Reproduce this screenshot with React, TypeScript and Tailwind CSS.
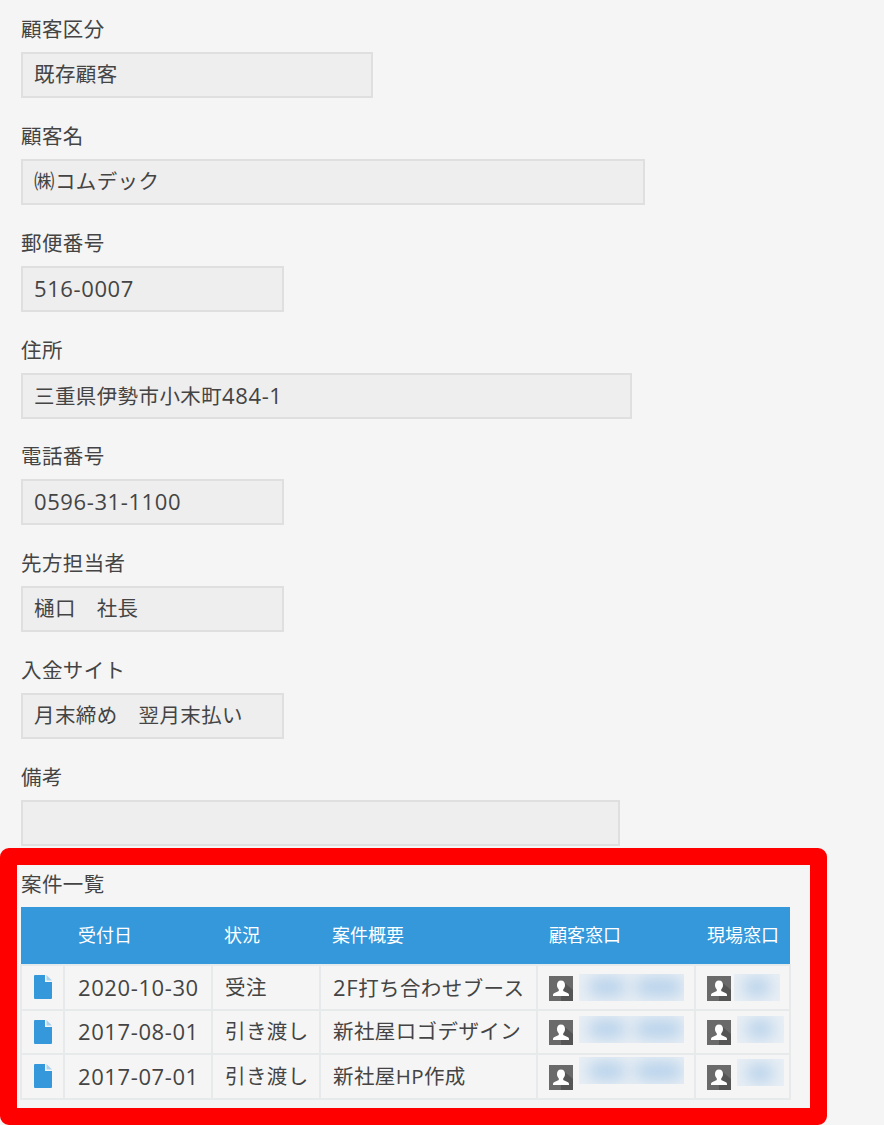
import type { ReactNode } from "react";

const FONT = "font-['Open_Sans','Noto_Sans_CJK_JP',sans-serif]";

// latin digits sit a bit bigger and wider than the kana around them
const Num = ({ children }: { children: ReactNode }) => (
  <span className="text-[22px] tracking-[0.6px]">{children}</span>
);

const fields: { label: string; value: ReactNode; width: string }[] = [
  { label: "顧客区分", value: "既存顧客", width: "w-[352px]" },
  { label: "顧客名", value: "㈱コムデック", width: "w-[624px]" },
  { label: "郵便番号", value: <Num>516-0007</Num>, width: "w-[263px]" },
  { label: "住所", value: <>三重県伊勢市小木町<Num>484-1</Num></>, width: "w-[611px]" },
  { label: "電話番号", value: <Num>0596-31-1100</Num>, width: "w-[263px]" },
  { label: "先方担当者", value: "樋口　社長", width: "w-[263px]" },
  { label: "入金サイト", value: "月末締め　翌月末払い", width: "w-[263px]" },
  { label: "備考", value: "", width: "w-[599px]" },
];

const rows = [
  { date: "2020-10-30", status: "受注", title: <><Num>2F</Num>打ち合わせブース</>, a: "mb-0", b: "mb-0 ml-[3px] w-[46px]" },
  { date: "2017-08-01", status: "引き渡し", title: "新社屋ロゴデザイン", a: "mb-[5px]", b: "mb-[5px] ml-[6px] w-[47px]" },
  { date: "2017-07-01", status: "引き渡し", title: "新社屋HP作成", a: "mb-[11px]", b: "mb-[7px] ml-[6px] w-[47px]" },
];

const FileIcon = () => (
  <svg width="18" height="24" viewBox="0 0 18 24" className="mx-auto block">
    <path d="M1 0H11V7H18V23a1 1 0 0 1-1 1H1a1 1 0 0 1-1-1V1a1 1 0 0 1 1-1Z" fill="#3498db" />
    <path d="M12.5 0 18 5.5H12.5Z" fill="#a9d2ee" />
  </svg>
);

const UserIcon = () => (
  <svg width="24" height="25" viewBox="0 0 24 25" className="mt-[2px] block shrink-0">
    <rect width="24" height="25" fill="#6a6a6a" />
    <path d="M12 4 24 14V25H12Z" fill="#555" />
    <path
      d="M12 4.500c2.600 0 4 2 4 4.600 0 2-.8 3.500-1.800 4.400v1.600l4.800 2.200c.7.300 1 .9 1 1.700v1H4v-1c0-.8.300-1.400 1-1.700l4.800-2.200v-1.600C8.800 12.600 8 11.100 8 9.100c0-2.600 1.400-4.600 4-4.600Z"
      fill="#fff"
    />
  </svg>
);

const Blurred = ({ className, blobs }: { className: string; blobs: string[] }) => (
  <div className={`flex h-[27px] items-center overflow-hidden bg-[#e9eff5] ${className}`}>
    {blobs.map((b, i) => (
      <div key={i} className={`h-[18px] shrink-0 rounded-full bg-[#b4d0ea] blur-[8px] ${b}`} />
    ))}
  </div>
);

export default function App() {
  return (
    <div className={`${FONT} h-[1125px] w-[884px] overflow-hidden bg-[#f5f5f5] text-[20.5px] text-[#444]`}>
      <div className="pt-[17px] pl-[21px]">
        {fields.map((f) => (
          <div key={f.label} className="h-[106.860px]">
            <div className="h-[35px] leading-[25px] tracking-[0.4px]">{f.label}</div>
            <div className={`${f.width} h-[46px] border-2 border-[#dfdfdf] bg-[#eeeeee] pl-[11px] leading-[40px] tracking-[0.4px]`}>
              {f.value}
            </div>
          </div>
        ))}
      </div>

      {/* 案件一覧 */}
      <section className="-mt-[23.880px] h-[277px] w-[827px] rounded-[9px] border-[17px] border-[#ff0000] pl-[4px]">
        <div className="h-[42px] pt-[6px] leading-[26px] tracking-[0.4px]">案件一覧</div>
        <table className="-ml-[1px] w-[769px] table-fixed border-collapse">
          <colgroup>
            <col className="w-[43px]" />
            <col className="w-[148px]" />
            <col className="w-[108px]" />
            <col className="w-[217px]" />
            <col className="w-[158px]" />
            <col className="w-[95px]" />
          </colgroup>
          <thead>
            <tr className="h-[58px] bg-[#3498db] text-left text-[18px] text-white">
              <th className="font-normal"></th>
              <th className="pl-[14px] font-normal">受付日</th>
              <th className="pl-[12px] font-normal">状況</th>
              <th className="pl-[12px] font-normal">案件概要</th>
              <th className="pl-[12px] font-normal">顧客窓口</th>
              <th className="pl-[12px] font-normal whitespace-nowrap">現場窓口</th>
            </tr>
          </thead>
          <tbody>
            {rows.map((r) => (
              <tr key={r.date} className="h-[44.500px] tracking-[0.4px]">
                <td className="border-2 border-[#e6eaea] p-0"><FileIcon /></td>
                <td className="border-2 border-[#e6eaea] pl-[13px]"><Num>{r.date}</Num></td>
                <td className="border-2 border-[#e6eaea] pl-[12px] whitespace-nowrap">{r.status}</td>
                <td className="border-2 border-[#e6eaea] pl-[12px] whitespace-nowrap">{r.title}</td>
                <td className="border-2 border-[#e6eaea] pl-[11px]">
                  <div className="flex items-center">
                    <UserIcon />
                    <Blurred className={`ml-[6px] w-[105px] ${r.a}`} blobs={["ml-[9px] w-[38px]", "ml-[9px] w-[48px]"]} />
                  </div>
                </td>
                <td className="border-2 border-[#e6eaea] pl-[11px]">
                  <div className="flex items-center">
                    <UserIcon />
                    <Blurred className={r.b} blobs={["ml-[9px] w-[28px]"]} />
                  </div>
                </td>
              </tr>
            ))}
          </tbody>
        </table>
      </section>
    </div>
  );
}
